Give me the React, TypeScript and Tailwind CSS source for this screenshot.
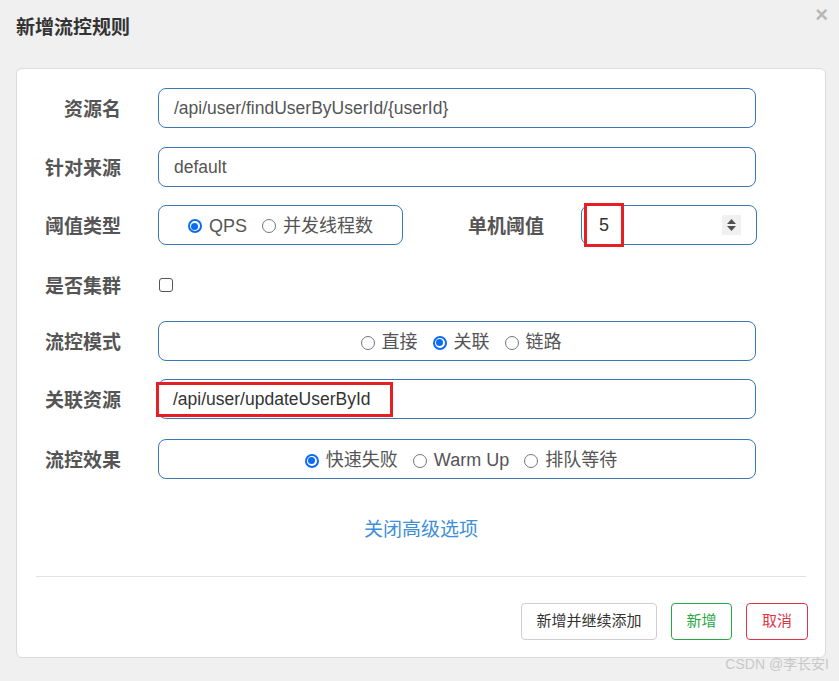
import React from "react";

const cjk = { fontFamily: '"Liberation Sans", "Noto Sans CJK SC", sans-serif' };

function Radio({ checked, label }: { checked?: boolean; label: string }) {
  return (
    <span className="inline-flex items-center gap-[7px]">
      {checked ? (
        <span className="w-[14px] h-[14px] rounded-full border-[2px] border-[#0b6cf0] flex items-center justify-center bg-white">
          <span className="w-[7px] h-[7px] rounded-full bg-[#0b6cf0]" />
        </span>
      ) : (
        <span className="w-[14px] h-[14px] rounded-full border border-[#767676] bg-white" />
      )}
      <span>{label}</span>
    </span>
  );
}

function Label({ children }: { children: React.ReactNode }) {
  return (
    <div className="w-[104px] shrink-0 text-right text-[19px] font-bold text-[#555] pt-[5px]">{children}</div>
  );
}

const boxCls =
  "h-[40px] border border-[#3a77b5] rounded-[8px] bg-white text-[17.5px] text-[#555] flex items-center";

export default function App() {
  return (
    <div className="w-[839px] h-[681px] bg-[#f0f0f0] relative overflow-hidden" style={cjk}>
      <div className="absolute right-[11px] top-[4px] text-[22px] font-bold text-[#b8b8b8] leading-none">×</div>
      <div className="pt-[15px] pl-[16px] text-[19px] font-bold text-[#333] leading-[26px]">新增流控规则</div>
      <div className="mt-[27px] ml-[16px] w-[810px] h-[590px] bg-white border border-[#dcdcdc] rounded-[6px] pt-[19px]">
        <div className="flex items-center">
          <Label>资源名</Label>
          <div className={boxCls + " ml-[37px] w-[598px] px-[15px]"}>/api/user/findUserByUserId/{"{userId}"}</div>
        </div>
        <div className="flex items-center mt-[19px]">
          <Label>针对来源</Label>
          <div className={boxCls + " ml-[37px] w-[598px] px-[15px]"}>default</div>
        </div>
        <div className="flex items-center mt-[18px]">
          <Label>阈值类型</Label>
          <div className={boxCls + " ml-[37px] w-[245px] justify-center gap-[15px] pt-[2px] text-[18px]"}>
            <Radio checked label="QPS" />
            <Radio label="并发线程数" />
          </div>
          <div className="w-[141px] text-right text-[19px] font-bold text-[#555] pt-[5px]">单机阈值</div>
          <div className={boxCls + " ml-[37px] w-[176px] relative"}>
            <div className="absolute left-[2px] top-[-3px] w-[40px] h-[44px] border-[3px] border-[#e81e25] bg-white flex items-center justify-center text-[18px] text-[#333] pt-[1px]">5</div>
            <div className="absolute right-[15px] top-[9px] w-[19px] h-[20px] bg-[#f0f0f0] flex flex-col items-center justify-center gap-[2px]">
              <svg width="9" height="5" viewBox="0 0 9 5"><path d="M4.5 0 L9 5 L0 5 Z" fill="#505050" /></svg>
              <svg width="9" height="5" viewBox="0 0 9 5"><path d="M0 0 L9 0 L4.5 5 Z" fill="#505050" /></svg>
            </div>
          </div>
        </div>
        <div className="flex items-center mt-[20px] h-[40px]">
          <Label>是否集群</Label>
          <div className="ml-[38px] w-[14px] h-[14px] border border-[#555] rounded-[3px] bg-white" />
        </div>
        <div className="flex items-center mt-[16px]">
          <Label>流控模式</Label>
          <div className={boxCls + " ml-[37px] w-[598px] justify-center gap-[15px] pt-[3px] pl-[8px] text-[18px]"}>
            <Radio label="直接" />
            <Radio checked label="关联" />
            <Radio label="链路" />
          </div>
        </div>
        <div className="flex items-center mt-[18px]">
          <Label>关联资源</Label>
          <div className={boxCls + " ml-[37px] w-[598px] relative"}>
            <div className="absolute left-[-3px] top-[2px] w-[237px] h-[35px] border-[3px] border-[#e81e25] bg-white flex items-center pl-[14px] text-[17.5px] text-[#333]">
              /api/user/updateUserById
            </div>
          </div>
        </div>
        <div className="flex items-center mt-[20px]">
          <Label>流控效果</Label>
          <div className={boxCls + " ml-[37px] w-[598px] justify-center gap-[15px] pt-[3px] pl-[8px] text-[18px]"}>
            <Radio checked label="快速失败" />
            <Radio label="Warm Up" />
            <Radio label="排队等待" />
          </div>
        </div>
        <div className="mt-[39px] text-center text-[19px] text-[#3d8fd8] leading-[24px]">关闭高级选项</div>
        <div className="mt-[34px] mx-[19px] border-t border-[#e3e3e3]" />
        <div className="flex justify-end gap-[14px] mt-[26px] pr-[17px] text-[15px]">
          <div className="w-[136px] h-[37px] border border-[#cfcfcf] rounded-[4px] flex items-center justify-center text-[#333]">新增并继续添加</div>
          <div className="w-[61px] h-[37px] border border-[#28a745] rounded-[4px] flex items-center justify-center text-[#28a745]">新增</div>
          <div className="w-[62px] h-[37px] border border-[#dc3545] rounded-[4px] flex items-center justify-center text-[#dc3545]">取消</div>
        </div>
      </div>
      <div className="absolute right-[10px] bottom-[6px] text-[14px] text-[#c8c8c8]">CSDN @李长安I</div>
    </div>
  );
}
